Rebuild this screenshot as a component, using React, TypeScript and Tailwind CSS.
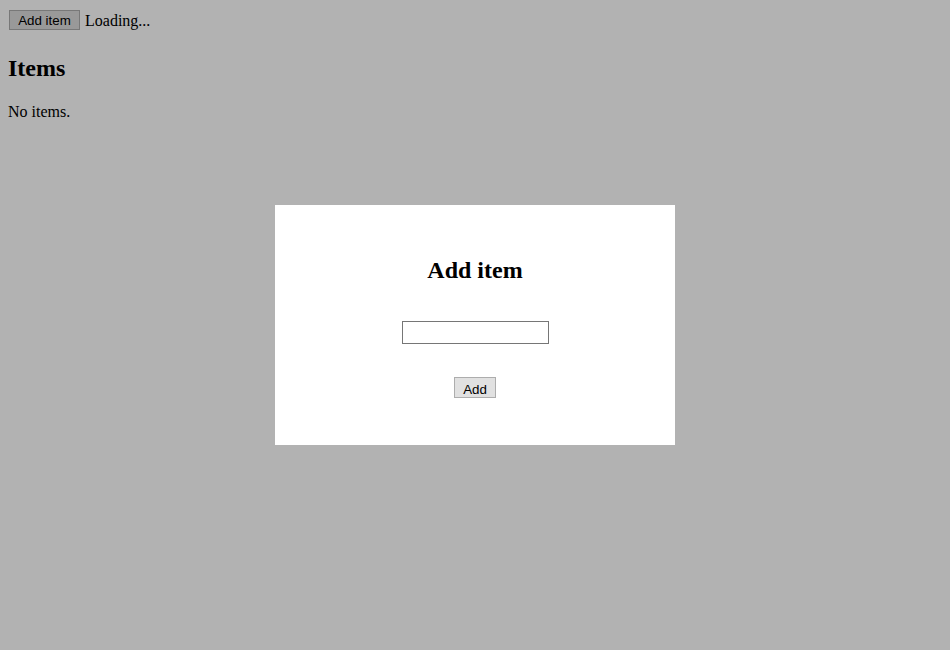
export default function App() {
  return (
    <div className="relative min-h-screen bg-white p-2 text-[16px] text-black [font-family:'Liberation_Serif','Times_New_Roman',serif]">
      {/* Page behind the dialog */}
      <div className="flex items-start">
        <button className="ml-px mt-[1.5px] h-[20px] w-[71px] border border-[#adadad] bg-[#dcdcdc] pb-0 pt-[3px] text-[13.33px] leading-[14px] [font-family:'Liberation_Sans',Arial,sans-serif]">
          Add item
        </button>
        <span className="ml-[5px] pt-[2px] leading-[22px]">Loading...</span>
      </div>
      <h2 className="mb-[19.92px] mt-[23px] text-[24px] font-bold leading-[27.6px]">Items</h2>
      <p className="mb-4 mt-[18px] leading-[18.4px]">No items.</p>

      {/* Modal */}
      <div className="fixed inset-0 flex items-center justify-center bg-black/30">
        <div className="flex h-[240px] w-[400px] flex-col items-center bg-white pt-[52px]">
          <h2 className="text-[24px] font-bold leading-[27.6px]">Add item</h2>
          <input
            type="text"
            className="mt-[36px] h-[23px] w-[147px] border border-[#767676] bg-white px-[2px] text-[13.33px] outline-none [font-family:'Liberation_Sans',Arial,sans-serif]"
          />
          <button className="mt-[33px] h-[21px] w-[42px] border border-[#adadad] bg-[#e1e1e1] pb-0 pt-[4px] text-[13.33px] leading-[13px] [font-family:'Liberation_Sans',Arial,sans-serif]">
            Add
          </button>
        </div>
      </div>
    </div>
  );
}
